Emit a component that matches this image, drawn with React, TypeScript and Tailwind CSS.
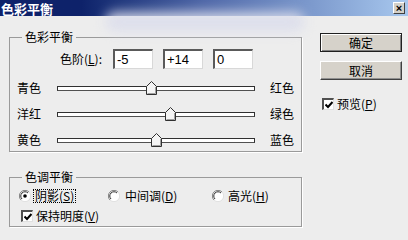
import React from "react";

const FONT = "font-['Noto_Sans_CJK_SC','Liberation_Sans',sans-serif]";

function Thumb() {
  return (
    <svg width="11" height="14" viewBox="0 0 11 14" className="block">
      <path d="M0.5 5.5 L5.5 0.5 L10.5 5.5 L10.5 13.5 L0.5 13.5 Z" fill="#f4f4f4" stroke="#303030" />
      <path d="M1.5 12.5 L9.5 12.5 L9.5 6" fill="none" stroke="#a0a0a0" />
    </svg>
  );
}

function Slider({ left, right, value }: { left: string; right: string; value: number }) {
  const pos = ((value + 100) / 200) * 198;
  return (
    <div className="flex h-[26px] items-center pl-[7px]">
      <span className="w-[40px] leading-none">{left}</span>
      <div className="relative h-[5px] w-[198px] border border-[#303030] border-b-[#505050] bg-white">
        <div className="absolute top-[-6px]" style={{ left: pos - 6 }}>
          <Thumb />
        </div>
      </div>
      <span className="ml-[15px] leading-none">{right}</span>
    </div>
  );
}

function NumBox({ v }: { v: string }) {
  return (
    <div className="flex h-[20px] w-[40px] items-center border border-t-2 border-l-2 border-t-[#5a5a5a] border-l-[#5a5a5a] border-r-[#d8d8d8] border-b-[#d8d8d8] bg-white pl-[2px] font-['Liberation_Sans',sans-serif] text-[13px] leading-none">
      {v}
    </div>
  );
}

function Radio({ on }: { on?: boolean }) {
  return (
    <svg width="12" height="12" viewBox="0 0 12 12" className="block shrink-0">
      <circle cx="6" cy="6" r="5.5" fill="#ffffff" />
      <path d="M10 2 A5.5 5.5 0 0 0 2 10" fill="none" stroke="#808080" />
      <path d="M9 3 A4.2 4.2 0 0 0 3 9" fill="none" stroke="#303030" />
      <path d="M2 10 A5.5 5.5 0 0 0 10 2" fill="none" stroke="#e0e0e0" />
      {on && <circle cx="6" cy="6" r="1.8" fill="#000" />}
    </svg>
  );
}

function Check() {
  return (
    <div className="flex h-[12px] w-[12px] shrink-0 items-center justify-center border border-t-2 border-l-2 border-t-[#505050] border-l-[#505050] border-r-[#e0e0e0] border-b-[#e0e0e0] bg-white">
      <svg width="8" height="8" viewBox="0 0 8 8">
        <path d="M0.5 3.5 L3 6 L7.5 1" fill="none" stroke="#000" strokeWidth="2" />
      </svg>
    </div>
  );
}

function Btn({ label, def }: { label: string; def?: boolean }) {
  return (
    <div
      className={
        "flex h-[19px] w-[82px] items-center justify-center bg-[#d6d2ca] text-[12px] leading-none " +
        (def
          ? "border border-[#202020] shadow-[inset_1px_1px_0_#ffffff,inset_-1px_-1px_0_#808080]"
          : "border border-t-[#ffffff] border-l-[#ffffff] border-r-[#404040] border-b-[#404040] shadow-[inset_-1px_-1px_0_#909090]")
      }
    >
      {label}
    </div>
  );
}

export default function App() {
  return (
    <div className={`relative h-[240px] w-[408px] overflow-hidden bg-[#ededed] text-[12px] text-black ${FONT}`}>
      <div className="flex h-[16px] items-center justify-between bg-gradient-to-r from-[#0e226a] from-20% via-[#5068a8] to-[#a8c8ee]">
        <span className="pl-[1px] text-[13px] leading-none font-bold text-white">色彩平衡</span>
        <div className="mr-[3px] flex h-[12px] w-[12px] items-center justify-center border border-t-white border-l-white border-r-[#404040] border-b-[#404040] bg-[#d4d0c8] text-[11px] leading-none font-bold font-['Liberation_Sans',sans-serif]">
          ×
        </div>
      </div>

      {/* blurred watermark over the caption */}
      <div className="pointer-events-none absolute top-[12px] left-[105px] h-[20px] w-[200px] rounded-full bg-[#dcdeec] opacity-90 blur-[6px]" />

      <div className="flex pt-[14px] pl-[9px]">
        <div className="flex w-[293px] flex-col">
          <fieldset className="h-[122px] border border-[#9a9a9a] shadow-[1px_1px_0_#ffffff]">
            <legend className="ml-[12px] px-[3px] leading-[14px]">色彩平衡</legend>
            <div className="mt-[5px] flex items-center pl-[50px]">
              <span className="w-[53px] leading-none">
                色阶(<span className="underline">L</span>):
              </span>
              <div className="flex gap-[10px]">
                <NumBox v="-5" />
                <NumBox v="+14" />
                <NumBox v="0" />
              </div>
            </div>
            <div className="mt-[6px]">
              <Slider left="青色" right="红色" value={-5} />
              <Slider left="洋红" right="绿色" value={14} />
              <Slider left="黄色" right="蓝色" value={0} />
            </div>
          </fieldset>

          <fieldset className="mt-[18px] h-[57px] border border-[#9a9a9a] shadow-[1px_1px_0_#ffffff]">
            <legend className="ml-[12px] px-[3px] leading-[14px]">色调平衡</legend>
            <div className="mt-[5px] flex h-[14px] items-center pl-[9px]">
              <div className="flex w-[89px] items-center gap-[2px]">
                <Radio on />
                <span className="border border-dotted border-black px-[1px] leading-[12px]">
                  阴影(<span className="underline">S</span>)
                </span>
              </div>
              <div className="flex w-[104px] items-center gap-[5px]">
                <Radio />
                <span className="leading-none">
                  中间调(<span className="underline">D</span>)
                </span>
              </div>
              <div className="flex items-center gap-[4px]">
                <Radio />
                <span className="leading-none">
                  高光(<span className="underline">H</span>)
                </span>
              </div>
            </div>
            <div className="mt-[7px] flex items-center gap-[3px] pl-[11px]">
              <Check />
              <span className="leading-none">
                保持明度(<span className="underline">V</span>)
              </span>
            </div>
          </fieldset>
        </div>

        <div className="ml-[18px] flex flex-col pt-[3px]">
          <Btn label="确定" def />
          <div className="mt-[9px]">
            <Btn label="取消" />
          </div>
          <div className="mt-[18px] ml-[2px] flex items-center gap-[3px]">
            <Check />
            <span className="leading-none">
              预览(<span className="underline">P</span>)
            </span>
          </div>
        </div>
      </div>
    </div>
  );
}
